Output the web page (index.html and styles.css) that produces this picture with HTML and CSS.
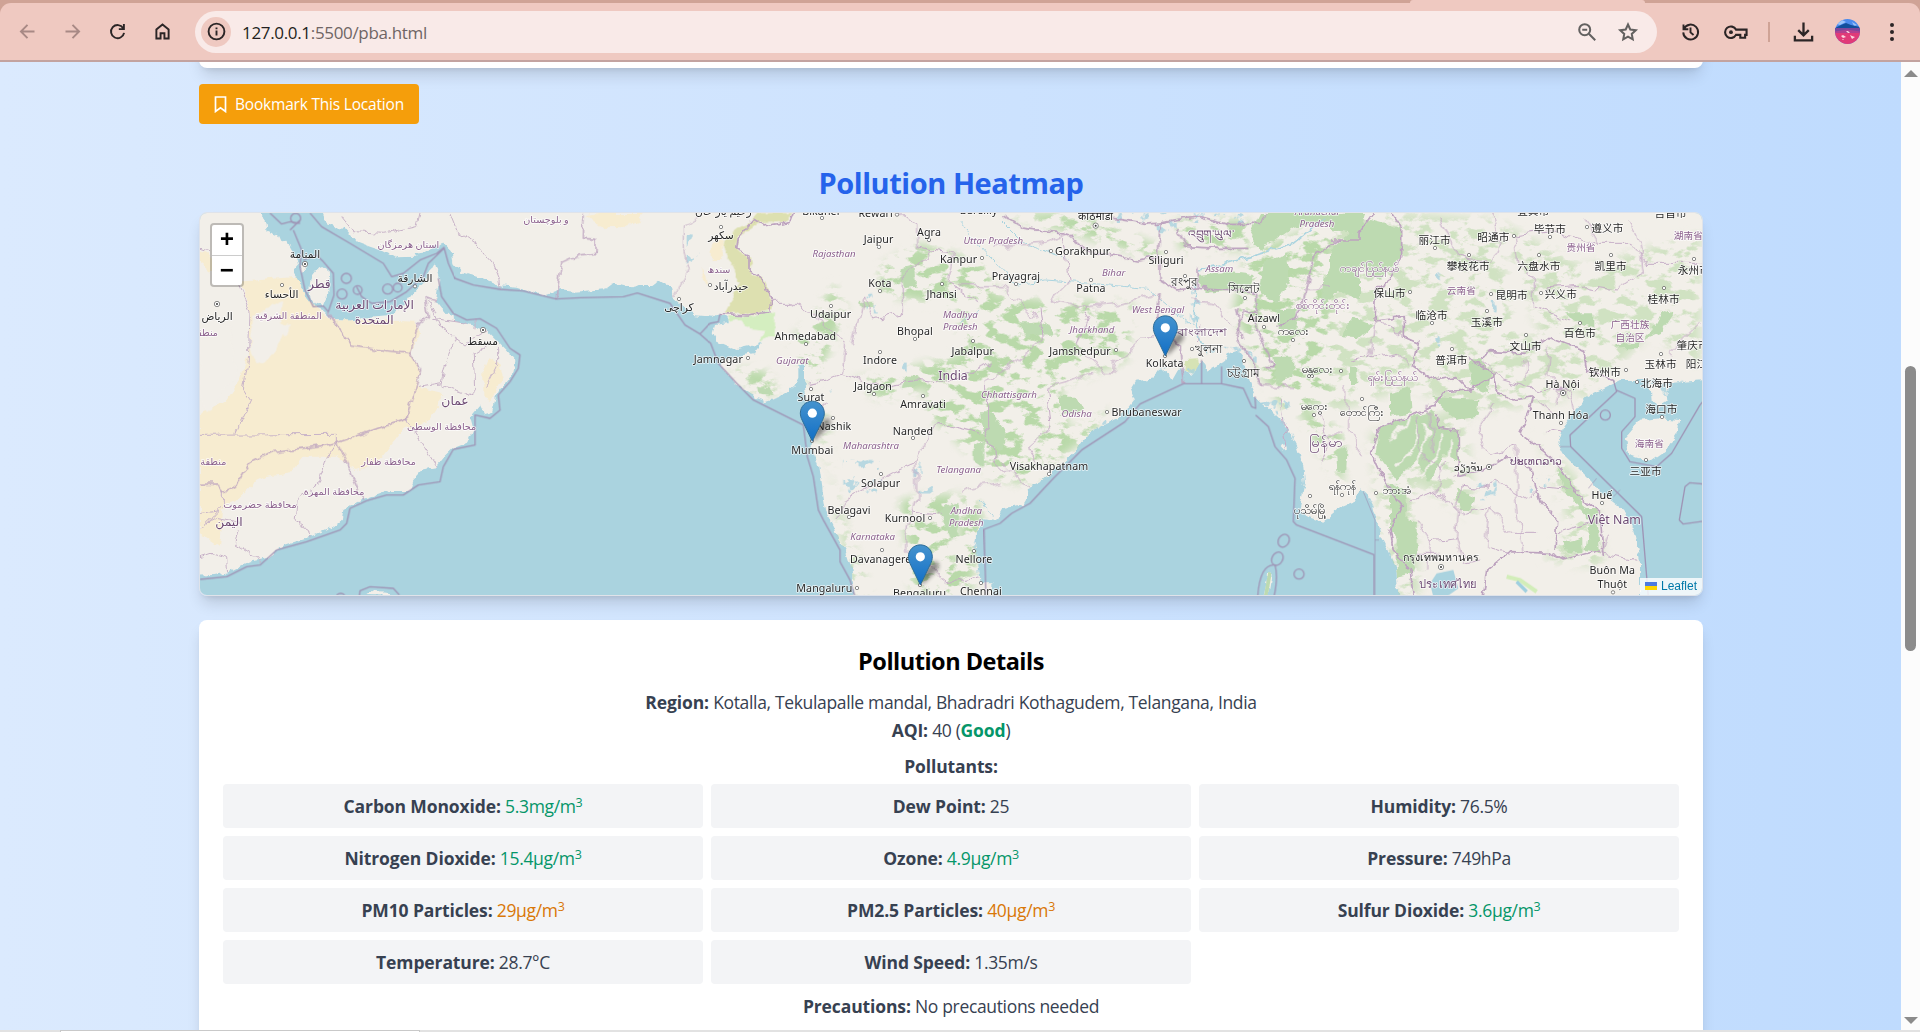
FILE: index.html
```html
<!DOCTYPE html>
<html lang="en">
<head>
<meta charset="utf-8">
<title>Pollution Heatmap</title>
<link rel="stylesheet" href="styles.css">
</head>
<body>
<div class="window">
  <header class="toolbar">
    <div class="tab-strip"><span class="tab-left"></span><span class="tab-right"></span></div>
    <div class="toolbar-row">
      <nav class="nav-icons">
        <svg class="dim" viewBox="0 0 24 24"><path d="M20 12H5M12 4.5 4.5 12l7.500 7.500"/></svg>
        <svg class="dim" viewBox="0 0 24 24"><path d="M4 12h15M12 4.500 19.500 12 12 19.500"/></svg>
        <svg viewBox="0 0 24 24"><path d="M18.500 8.200A7.500 7.500 0 1 0 19.500 13.500M19.300 3.500v5.800h-5.800"/></svg>
        <svg viewBox="0 0 24 24"><path d="M5 20V9.800L12 4l7 5.800V20h-4.800v-6H9.800v6z"/></svg>
      </nav>
      <div class="address">
        <span class="info"><svg viewBox="0 0 24 24"><circle cx="12" cy="12" r="10"/><path d="M12 10.700v6.500M12 6.800v2.200"/></svg></span>
        <span class="url"><b>127.0.0.1</b>:5500/pba.html</span>
        <svg class="grey" viewBox="0 0 24 24"><circle cx="9.500" cy="9.500" r="6"/><path d="m14 14 7 7M6.800 9.500h5.400"/></svg>
        <svg class="grey" viewBox="0 0 24 24"><path d="m12 3.800 2.500 5.500 6 .7-4.400 4.100 1.100 5.900-5.200-2.900L6.800 20l1.100-5.900L3.500 10l6-.7z"/></svg>
      </div>
      <div class="actions">
        <svg viewBox="0 0 24 24"><path d="M4 4v5.500h5.500M4.500 9A8.500 8.500 0 1 1 3.700 13M12 7.500V13l3.500 3"/></svg>
        <svg class="key" viewBox="0 0 26 24"><path d="M13.500 9.500A6 6 0 1 0 13.500 15H18v3h5v-3h1.500V9.500z"/><circle class="solid" cx="8.300" cy="12.200" r="2"/></svg>
        <i class="divider"></i>
        <svg class="download" viewBox="0 0 24 24"><path d="M12 2.500v13M6.500 10.500 12 16l5.500-5.500M3 16.500v4.700h18v-4.700"/></svg>
        <svg class="avatar" viewBox="0 0 25 25"><clipPath id="face"><circle cx="12.500" cy="12.500" r="12.500"/></clipPath><g clip-path="url(#face)"><path fill="#4b8bee" d="M0 0h25v25H0z"/><path fill="#9cc5fa" d="M2 5l5-4 4 2-6 3zM17 3l5 3-3 1z"/><path fill="#124f9c" d="M0 9l6-3 5-2 5 2 9 2v3H0z"/><path fill="#7c479c" d="M0 9h25v5H0z"/><path fill="#e03a78" d="M0 13h25v12H0z"/><path fill="#b04090" d="M0 12.500l12-2 13 2v1.500H0z"/><path fill="#fbd8e0" d="M6 17l2-1 3 2-3 1zM15 16l2 1 3 1-3 2zM11 12l2 0 2 2-2 0zM7 20l2 0-1 1z"/></g></svg>
        <svg class="dots" viewBox="0 0 6 18"><circle class="solid" cx="3" cy="2" r="2"/><circle class="solid" cx="3" cy="9" r="2"/><circle class="solid" cx="3" cy="16" r="2"/></svg>
      </div>
    </div>
  </header>

  <div class="viewport">
    <main class="page">
      <section class="search-card"></section>
      <button class="bookmark"><svg viewBox="0 0 12 17"><path d="M1 1h10v14.500L6 11.800 1 15.500z"/></svg>Bookmark This Location</button>
      <h2 class="heading">Pollution Heatmap</h2>

      <section class="map">
        <svg class="tiles" viewBox="30 39 4506 1146" preserveAspectRatio="none">
          <defs>
            <filter id="coast" filterUnits="userSpaceOnUse" x="0" y="0" width="4600" height="1230" color-interpolation-filters="sRGB">
              <feTurbulence type="fractalNoise" baseFrequency="0.035" numOctaves="3" seed="4"/>
              <feDisplacementMap in="SourceGraphic" scale="22" xChannelSelector="R" yChannelSelector="G"/>
            </filter>
            <filter id="wiggle" filterUnits="userSpaceOnUse" x="0" y="0" width="4600" height="1230" color-interpolation-filters="sRGB">
              <feTurbulence type="fractalNoise" baseFrequency="0.022" numOctaves="2" seed="9"/>
              <feDisplacementMap in="SourceGraphic" scale="42" xChannelSelector="R" yChannelSelector="G"/>
            </filter>
            <filter id="speckle" filterUnits="userSpaceOnUse" x="0" y="0" width="4600" height="1230" color-interpolation-filters="sRGB">
              <feGaussianBlur in="SourceGraphic" stdDeviation="14" result="soft"/>
              <feTurbulence type="fractalNoise" baseFrequency="0.018 0.03" numOctaves="5" seed="21"/>
              <feColorMatrix values="0 0 0 0 0  0 0 0 0 0  0 0 0 0 0  9 0 0 0 -4.500" result="spots"/>
              <feComposite in="soft" in2="spots" operator="in"/>
            </filter>
            <filter id="veins" filterUnits="userSpaceOnUse" x="0" y="0" width="4600" height="1230" color-interpolation-filters="sRGB">
              <feTurbulence type="fractalNoise" baseFrequency="0.03" numOctaves="4" seed="33"/>
              <feColorMatrix values="0 0 0 0 0  0 0 0 0 0  0 0 0 0 0  0 12 0 0 -7.200" result="spots"/>
              <feComposite in="SourceGraphic" in2="spots" operator="in"/>
            </filter>
            <filter id="blur" x="-50%" y="-50%" width="200%" height="200%"><feGaussianBlur stdDeviation="2.200"/></filter>
            <linearGradient id="pinfill" x1="0" y1="0" x2="0" y2="1"><stop offset="0" stop-color="#4593ce"/><stop offset="1" stop-color="#126fc6"/></linearGradient>
            <g id="pin">
              <path d="M12.500 40.500 17 25 27 17q6 1 3 8L17 38z" fill="#000" opacity=".42" filter="url(#blur)"/>
              <path d="M12.500.500C5.900.500.500 5.900.500 12.500c0 2.500.700 4.700 1.800 7L12.500 40.600l10.200-21.100c1.100-2.300 1.800-4.500 1.800-7C24.500 5.900 19.100.500 12.500.500z" fill="url(#pinfill)" stroke="#2e6c97" stroke-width="1"/>
              <circle cx="12.500" cy="12.500" r="4.600" fill="#fff"/>
            </g>
            <g id="land">
              <path d="M0 0H200L225 70 230 92 260 105 270 127 292 125 312 160 330 190 308 215 330 250 350 290 375 325 400 332 430 360 480 362 540 350 600 345 640 320 660 290 700 250 735 190 748 240 738 300 770 340 800 365 860 378 890 390 920 420 950 450 976 480 970 520 940 560 905 605 870 615 840 650 850 690 835 727 790 745 760 775 738 802 700 808 670 840 660 870 600 870 520 900 460 930 455 960 430 980 360 1010 280 1035 230 1075 180 1085 120 1115 70 1125 0 1128z"/>
              <path d="M362 230 388 198 412 212 416 240 410 290 398 318 370 310 358 270zM335 195l10-2 3 18-8 4z"/>
              <path d="M385 0 410 70 470 90 500 125 540 140 570 150 600 165 650 165 720 155 760 125 785 150 790 190 810 215 860 230 920 255 980 260 1060 287 1110 270 1150 275 1240 268V0z"/>
              <path d="M870 615 918 590 905 640 885 645zM530 1185l20-12 40 2 20 12zM600 160l70 0 10 10-60 2z"/>
              <g transform="translate(1170)">
                <path d="M0 0V268L80 265 100 250 150 262 180 255 220 255 240 240 268 258 275 290 310 320 340 345 400 350 415 340 440 350 440 370 405 375 398 400 412 425 470 450 515 440 545 425 520 460 480 468 425 478 425 500 450 530 490 570 530 595 560 603 600 590 640 560 655 530 655 492 675 492 675 540 682 600 690 640 695 680 695 740 715 800 725 870 735 930 760 980 770 1010 800 1060 815 1110 828 1230H1240V1150L1200 1150 1190 1110 1190 1000 1205 960V0z"/>
              </g>
              <g transform="translate(2310)">
                <path d="M0 0V1230H68L60 1130 50 1050 50 990 70 955 110 960 130 925 190 915 205 890 200 865 250 840 310 790 350 750 400 690 480 650 500 630 522 600 510 570 525 545 580 535 600 505 640 540 660 505 700 522 725 480 740 515 790 490 800 460 830 450 850 475 870 550 885 590 930 630 960 660 990 700 1010 740 1030 800 1035 850 1020 920 1040 950 1090 965 1140 920 1180 900 1200 870V0z"/>
                <path d="M965 738l10-4 6 12-8 2zM925 1115l10 5-12 70h-12z"/>
              </g>
              <g transform="translate(3420)">
                <path d="M0 0V945L30 922 70 905 90 862 110 880 130 920 150 1000 180 1060 200 1120 208 1230H930V1080L910 990 880 930 830 890 800 860 760 820 700 760 685 730 700 680 730 640 770 590 810 570 870 540 960 540 965 600 990 618 1015 600 1010 550 1060 545 1160 538V0z"/>
                <path d="M885 715 930 662 990 655 1050 660 1042 700 1010 750 960 785 895 765z"/>
              </g>
            </g>
            <mask id="onland" maskUnits="userSpaceOnUse" x="0" y="0" width="4600" height="1230"><use href="#land" fill="#fff"/></mask>
          </defs>
          <path fill="#aad3df" d="M0 0h4600v1230H0z"/>
          <use href="#land" fill="#f2efe9" filter="url(#coast)"/>

          <g fill="#f7ecd0" filter="url(#coast)">
            <path d="M30 150 60 165 75 200 60 215 30 190zM150 245 320 230 350 290 385 330 430 362 540 360 680 365 690 400 662 460 692 510 680 560 760 580 720 660 640 690 560 790 500 810 440 770 340 770 300 820 230 830 190 850 140 900 100 920 90 1040 30 1000V640L110 600 150 540 180 440 180 330z"/>
            <path d="M895 475 925 490 940 530 905 600 880 590 880 510zM745 620 720 660 640 690 680 600z"/>
            <path transform="translate(1170)" d="M20 45 60 80 130 82 180 60 190 39H60zM395 130 430 120 425 180 395 180zM360 200l20 30 5 30-20-30z"/>
          </g>
          <g fill="#f2efe9" filter="url(#coast)">
            <path d="M190 345 280 300 270 370 300 380 240 480 200 490 180 450zM55 640 30 600V350L120 380 140 520z"/>
          </g>
          <g transform="translate(1170)" filter="url(#coast)">
            <path fill="#dde0b0" d="M540 39 520 60 480 80 440 110 430 160 460 200 480 250 435 335 500 345 575 330 575 300 545 230 515 225 510 170 470 150 475 110 540 70 620 65 640 39z"/>
            <path fill="#d4eec0" d="M445 345 500 350 560 335 585 340 580 410 540 425 560 390 510 385 480 360 445 365z"/>
          </g>

          <g mask="url(#onland)">
            <g fill="#b9d9a9" filter="url(#speckle)">
              <g transform="translate(1170)">
                <path d="M900 200 1020 130 1240 200 1240 330 1000 300 900 280zM820 540 1000 500 1240 440V600L1060 560 900 600zM1040 560 1240 540V830L1150 740 1040 640z"/>
                <path d="M700 620 740 640 760 900 830 1180 870 1185 790 960zM960 900 1120 880 1120 1060 1180 1185 1000 1185zM630 420 700 360 760 250 800 330 700 560zM450 510l100 0 50 60-60 20z" />
              </g>
              <g transform="translate(2310)">
                <path d="M0 270 260 300 520 310 500 480 300 560 330 700 440 620 400 700 200 850 100 840 60 600 0 560zM130 39 600 180 600 140 360 39zM650 60 870 60 860 150 660 150zM0 880 50 900 70 960 30 1185H0z"/>
                <path d="M860 160 1110 60 1110 600 980 640 900 520 820 330zM1000 600 1150 700 1150 860 1080 760z"/>
              </g>
              <g transform="translate(3420)">
                <path d="M0 39 220 39 500 60 560 400 800 440 700 600 420 640 240 560 0 640zM120 700 400 620 440 960 250 850 270 1185H200L150 980zM620 700 800 900 820 1100 640 1080 720 980zM500 60 760 200 1110 100V500L960 400 760 600 640 420z" opacity=".6"/>
              </g>
            </g>
            <g fill="#bddab1" filter="url(#coast)">
              <g transform="translate(2310)">
                <path d="M900 39H1110V70L1000 80 900 150 870 100zM715 225 800 215 880 225 870 265 740 275 715 250zM910 190l70-30 10 80-40 70-50-30zM950 330l60 0 0 60-60 0zM940 470l60 0 0 60-50 20zM180 370l80 0 20 30-80 10zM60 640 100 640 140 700 130 750 80 740zM300 590l50 0 20 40-70 20zM1150 140 1200 150V300L1130 270 1080 340 1090 240z"/>
                <path fill="#d6e3b5" d="M675 480 715 478 718 518 672 530z"/>
                <path d="M920 1115l14 0-8 70h-14z"/>
              </g>
              <g transform="translate(3420)">
                <path d="M0 150 60 100 120 60 215 85 215 170 150 240 90 190 40 240 0 300zM0 39H110L90 100 0 90zM62 350 130 375 85 415 38 412zM20 745 50 745 45 820 25 810zM180 580 240 565 245 640 180 650zM60 500 85 500 85 545 60 555z"/>
                <path d="M415 475 450 475 480 520 470 580 425 560 420 500zM310 590 445 600 440 650 380 660 330 620zM150 680 310 630 330 680 385 690 390 790 340 760 300 850 260 780 200 840 140 760zM180 850 225 870 230 960 260 970 260 1060 245 1120 200 1130 200 1020 180 990zM375 860 430 890 420 930 390 930zM1000 330 1030 340 990 400 940 420 980 370zM705 340 790 340 790 380 730 360zM850 440 930 425 930 445 860 445zM680 800 720 840 770 930 800 930 810 1060 770 1050 780 960 700 870zM700 1030 760 1010 760 1060 710 1060z"/>
              </g>
              <g transform="translate(1170)">
                <path d="M965 205 1000 195 1010 260 970 265zM840 305l40 0 0 15-35 3zM530 560l50 10-5 15-40-5zM975 530l40 0 0 25-50 10zM1180 740l30-20 0 80-30-20zM1075 930l60-25 0 110-25 0z"/>
              </g>
            </g>
            <g fill="none" stroke="#f2efe9" stroke-width="7" filter="url(#wiggle)">
              <path d="M3600 720Q3640 690 3650 650M3620 800Q3690 750 3680 670M3670 790Q3730 730 3710 660M3700 820Q3760 770 3750 690M3780 720V780"/>
            </g>
            <g fill="#a9d2de" filter="url(#veins)">
              <path transform="translate(1170)" d="M320 80h40v120h-40zM860 280h40v60h-40zM940 470h40v50h-40zM750 540h40v40h-40zM790 780h120v100h-120zM1000 780h60v100h-60zM1180 980h30v140h-30z" opacity=".8"/>
              <path transform="translate(2310)" d="M470 39h450v30H470zM590 60h60v40h-60zM690 240h30v140h-30zM600 500h130v40H600zM730 440h160v80H730zM890 600h120v130H890zM380 660h60v40h-60z" opacity=".8"/>
              <path transform="translate(3420)" d="M290 190h40v70h-40zM300 400h30v60h-30zM460 260h40v80h-40zM440 840h60v60h-60zM600 820h60v60h-60zM900 540h160v50H900z" opacity=".8"/>
            </g>
            <g transform="translate(2310)" fill="none" stroke="#abd4df" stroke-width="3" filter="url(#coast)">
              <path stroke-width="5" d="M720 210 800 190 900 160 1000 130 1060 80 1100 60M706 250V380L740 460"/><path d="M0 70 80 160 170 255 260 240 390 250 560 265 700 380M120 60 190 130 330 180M0 370 60 330M60 900 100 950"/>
            </g>
            <path fill="#aad3df" d="M3740 1120 3790 1110 3805 1165 3770 1190 3730 1190 3720 1150z"/>
            <path d="M3950 1130 3990 1140 4040 1175" fill="none" stroke="#d2edb9" stroke-width="12"/><path d="M3980 1145 4010 1175" fill="none" stroke="#9fcfdf" stroke-width="10"/>
          </g>

          <g fill="none" stroke="#c8b3c8" stroke-width="3" filter="url(#coast)">
            <path d="M30 145 60 155M145 255 180 335 175 480 160 570 182 605 138 700M30 706 442 703V728M442 728 408 780 385 850 325 895 318 965 355 985 360 1015M30 940 90 932 50 970 80 955 150 970M100 875V915L30 985M145 985 135 1030 200 1070 212 1090M30 1070 60 1060 110 1075 113 1120M455 50 490 95 580 100 680 80 690 39M780 39 800 90 860 130 910 190 930 240 935 270M710 290 750 380 825 435 895 390M800 415 765 500 752 555 855 590 850 465 890 440M752 548 680 560M648 655 740 802M730 355 830 370M855 385V360M920 440 920 500 890 560"/>
            <path transform="translate(1170)" d="M360 50 310 80 310 150 325 210 300 270 275 290"/>
          </g>
          <g fill="none" stroke="#bda3bf" stroke-width="4" stroke-linejoin="round" filter="url(#coast)">
            <path d="M415 340 482 438 660 461 692 510 648 655 442 728 360 742 245 755 180 788 135 860 100 875 84 852 30 853M442 728 522 905M660 461 685 370 715 350 705 290 740 300M1098 295 1115 190 1170 165 1215 160 1215 118 1180 115 1182 39"/>
            <g transform="translate(1170)">
              <path stroke-width="5" d="M640 39 630 65 550 78 520 60 475 110 470 150 510 165 510 215 545 235 575 300 572 335 500 345 420 340"/>
            </g>
            <g transform="translate(2310)">
              <path stroke-width="5" d="M130 45 190 85 320 100 380 150 460 165 530 180 595 170 600 70 640 60M460 55 560 70 640 60 720 50 800 70 900 70 920 39M650 90 680 140 780 145 865 145M600 180 600 240 650 270 715 260 710 200M600 280 590 350 660 440 670 550M715 262 820 270 890 280 890 340 850 330 830 420 870 470 905 560M830 330 850 420M870 330 905 420 940 500 910 500M1140 120 1060 170 1040 270 1010 350 950 380"/>
            </g>
            <g transform="translate(3420)">
              <path stroke-width="5" d="M0 120 90 120 90 95 130 39M185 39 215 85 215 170 180 240 140 270 135 360 220 350 220 410 265 430 250 500 310 540 380 530 420 570 500 520M415 475 490 520 500 580 550 600 610 590 600 630 570 700 640 750 680 790 740 880 810 940 820 1070M450 475 480 455 590 460 660 410 760 450 770 510 850 540M420 570 340 575 310 620 235 650 150 680 125 760 160 840 215 910 180 990 190 1050 240 1110 250 1190M320 640 330 685 385 690 385 830M370 830 460 810 530 770 600 800 630 900 680 960 675 1050M460 1190 470 1110 540 1055 660 1060 700 1080 810 1050"/>
            </g>
          </g>
          <g fill="none" stroke="#c5abc6" stroke-width="3" filter="url(#wiggle)">
            <g transform="translate(1170)">
              <path d="M575 310 640 310 700 340 760 400 800 430 790 520 740 540 680 550M820 430 850 290 880 360 970 340 970 230 1060 150 1120 160 1100 250 1200 300M780 520 900 560 1010 540 1080 550 1240 490M740 600 720 640M1210 700 1070 670 1030 730 1010 790 940 820 800 900 760 960M1010 790 1010 900 980 980 980 1060 1050 1100 1090 1150 1200 1130M1080 940 1000 930M960 39 1010 80 1010 140 1060 150"/>
            </g>
            <g transform="translate(2310)">
              <path d="M310 110 330 240 270 300 390 320 480 310 590 280M390 320 350 440 440 520 540 430 590 380M240 320 250 420 180 480 80 540 80 680 110 780 200 860M400 520 260 560 270 680 200 740 240 800M0 260 130 260 230 350M700 300 760 310 820 380M1000 560 900 550M1040 270 1110 260M1060 620 1110 720 1080 800M1090 700 1150 700M0 880 60 860 130 850M960 600 980 740M100 140 240 130 320 100M700 430 720 380"/>
            </g>
            <g transform="translate(3420)">
              <path d="M330 39 380 170 480 190 510 120 490 39M550 110 560 190 610 230 610 320 720 360M550 105 660 90 800 130 760 60M800 130 900 130 950 190 1110 190M640 270 780 260 860 270 940 220 930 120 900 60M1080 400 1110 370M1020 460 1080 400M60 490 200 460 240 500M50 560 50 680 100 760M120 480 140 360 210 400M450 480 520 540 620 570 720 560M580 480 590 540M660 440 650 520 690 560 720 600M620 600 680 650M500 610 440 700 480 760 560 740M630 860 740 870M680 1000 800 960"/>
              <path d="M250 900 320 880 400 940 480 920 540 1000 620 1000M320 880 340 780M260 960 300 1020 380 1010 400 1090 450 1080M300 1020 290 1100M380 1010 390 860 470 870 500 840 590 900 620 870M480 920 470 1040 540 1060M560 740 560 900 570 1000 580 1060M260 1060 330 1060M640 690 700 700M840 1000 820 1060M830 1060 920 1080M260 640 270 760 340 820M300 620 310 760M720 560 740 640M690 560 680 620"/>
            </g>
          </g>

          <g fill="none" stroke="#9c89ae" stroke-width="4" stroke-linejoin="round" opacity=".85">
            <path d="M240 39 275 72 300 65 330 70M360 39 395 80 480 130 580 190 605 230 640 220 690 180 740 160 762 142 775 190 795 235 850 255 930 268 1000 273 1098 297 1170 293 1300 290 1342 279 1440 310 1485 375 1530 402 1560 370 1585 365 1590 342M1530 402 1562 430 1585 490 1640 550 1690 600 1840 675 1852 770 1870 830 1885 930 1900 960 1950 1050 1950 1085 1980 1140 1995 1190M310 90 335 150 330 200 345 270 370 320 400 318 415 335 432 285 430 220 400 185 380 165 340 180M500 260 515 290 545 310 600 305 650 275 700 230 715 190 762 145M300 90 330 60M745 235 755 290 790 340 830 360 870 356 920 385 960 445 990 465 985 505 960 545 925 585 930 630 900 655 855 645 855 735 790 748 760 800 750 845 685 855 640 885 590 885 530 902 480 925 470 970 450 990 350 1025 260 1050 210 1095 170 1100 110 1130 30 1138M508 1190 510 1172 540 1160 610 1165 628 1185M440 1185q12-10 24 0"/>
            <circle cx="469" cy="235" r="15"/><circle cx="456" cy="282" r="15"/><circle cx="593" cy="267" r="15"/><circle cx="623" cy="263" r="13"/><circle cx="317" cy="55" r="15"/><circle cx="503" cy="270" r="13"/>
            <path transform="translate(2310)" d="M78 1190 72 988 120 970 155 940 210 910 280 835 365 750 495 665 540 612 670 551H785L850 565 875 620 887 625 885 590M887 645 925 680 945 740 980 780 1005 835 1000 965 1010 975 1242 1064V1190M893 1190Q900 1090 945 1095 955 1130 942 1190M725 480V550M785 500V550"/>
            <g transform="translate(2310)"><ellipse cx="971" cy="1022" rx="16" ry="20" transform="rotate(30 971 1022)"/><ellipse cx="952" cy="1076" rx="16" ry="21" transform="rotate(30 952 1076)"/><circle cx="1017" cy="1122" r="15"/></g>
            <path transform="translate(3420)" d="M850 540 860 575 720 705 722 740 935 950 955 1190M858 570 915 595V650L875 695 875 745 900 785 980 800 1025 760 1110 615 1130 590M1130 853 1080 848 1065 860 1048 960 1060 972 1130 962"/>
            <path stroke-width="2" d="M3520 875 3555 960V1190M3555 1020h12M4140 740H4110M4220 835 4195 865M4270 890 4290 870"/>
            <circle cx="4246" cy="645" r="15"/>
          </g>

          <g class="dots-layer">
            <circle cx="276" cy="255" r="5"/><circle cx="675" cy="259" r="5"/>
            <g class="capital"><circle cx="345" cy="192" r="8"/><circle cx="81" cy="312" r="8"/><circle cx="879" cy="390" r="8"/><circle cx="2717" cy="77" r="8"/><circle cx="4119" cy="579" r="8"/><circle cx="3897" cy="801" r="8"/><circle cx="3753" cy="1101" r="8"/></g>
            <g class="capital-core"><circle cx="345" cy="192" r="3"/><circle cx="81" cy="312" r="3"/><circle cx="879" cy="390" r="3"/><circle cx="2717" cy="77" r="3"/><circle cx="4119" cy="579" r="3"/><circle cx="3897" cy="801" r="3"/><circle cx="3753" cy="1101" r="3"/></g>
            <g transform="translate(1170)"><circle cx="423" cy="81" r="5"/><circle cx="390" cy="255" r="5"/><circle cx="297" cy="297" r="5"/><circle cx="726" cy="54" r="5"/><circle cx="951" cy="44" r="5"/><circle cx="897" cy="141" r="5"/><circle cx="1047" cy="120" r="5"/><circle cx="1086" cy="252" r="5"/><circle cx="900" cy="273" r="5"/><circle cx="753" cy="318" r="5"/><circle cx="1005" cy="417" r="5"/><circle cx="678" cy="432" r="5"/><circle cx="900" cy="456" r="5"/><circle cx="504" cy="474" r="5"/><circle cx="1179" cy="423" r="5"/><circle cx="693" cy="567" r="5"/><circle cx="882" cy="582" r="5"/><circle cx="1029" cy="588" r="5"/><circle cx="759" cy="654" r="5"/><circle cx="999" cy="714" r="5"/><circle cx="696" cy="723" r="5"/><circle cx="903" cy="822" r="5"/><circle cx="807" cy="951" r="5"/><circle cx="1050" cy="954" r="5"/><circle cx="906" cy="1050" r="5"/><circle cx="1182" cy="1053" r="5"/><circle cx="1020" cy="1155" r="5"/><circle cx="831" cy="1164" r="5"/></g>
            <g transform="translate(2310)"><circle cx="66" cy="174" r="5"/><circle cx="273" cy="153" r="5"/><circle cx="168" cy="252" r="5"/><circle cx="393" cy="240" r="5"/><circle cx="618" cy="156" r="5"/><circle cx="675" cy="228" r="5"/><circle cx="855" cy="294" r="5"/><circle cx="912" cy="381" r="5"/><circle cx="999" cy="420" r="5"/><circle cx="468" cy="450" r="5"/><circle cx="615" cy="468" r="5"/><circle cx="696" cy="447" r="5"/><circle cx="852" cy="483" r="5"/><circle cx="1143" cy="513" r="5"/><circle cx="441" cy="636" r="5"/><circle cx="1062" cy="645" r="5"/><circle cx="267" cy="822" r="5"/><circle cx="1050" cy="888" r="5"/><circle cx="1146" cy="885" r="5"/><circle cx="63" cy="1149" r="5"/></g>
            <g transform="translate(3420)"><circle cx="315" cy="144" r="5"/><circle cx="552" cy="108" r="5"/><circle cx="417" cy="165" r="5"/><circle cx="660" cy="111" r="5"/><circle cx="627" cy="165" r="5"/><circle cx="771" cy="81" r="5"/><circle cx="843" cy="165" r="5"/><circle cx="1092" cy="177" r="5"/><circle cx="240" cy="276" r="5"/><circle cx="483" cy="282" r="5"/><circle cx="633" cy="279" r="5"/><circle cx="1002" cy="264" r="5"/><circle cx="306" cy="369" r="5"/><circle cx="471" cy="333" r="5"/><circle cx="750" cy="369" r="5"/><circle cx="588" cy="405" r="5"/><circle cx="366" cy="447" r="5"/><circle cx="993" cy="462" r="5"/><circle cx="888" cy="510" r="5"/><circle cx="921" cy="546" r="5"/><circle cx="96" cy="597" r="5"/><circle cx="996" cy="651" r="5"/><circle cx="693" cy="669" r="5"/><circle cx="948" cy="780" r="5"/><circle cx="138" cy="879" r="5"/><circle cx="816" cy="909" r="5"/><circle cx="849" cy="1177" r="5"/></g>
          </g>

          <g class="city">
            <text x="345" y="175">المنامة</text><text x="275" y="294">الأحساء</text><text x="81" y="359">الرياض</text><text x="675" y="247">الشارقة</text><text x="878" y="434">مسقط</text>
            <g transform="translate(1170)">
              <text x="423" y="118">سکھر</text><text x="453" y="271">حيدرآباد</text><text x="297" y="334">کراچی</text><text x="430" y="44">رحیم یار خان</text>
              <text x="725" y="45">Bikaner</text><text x="887" y="52">Rewari</text><text x="1196" y="42">Bareilly</text><text x="896" y="129">Jaipur</text><text x="1047" y="108">Agra</text><text x="1136" y="188">Kanpur</text><text x="900" y="261">Kota</text><text x="1085" y="293">Jhansi</text><text x="752" y="355">Udaipur</text><text x="1005" y="404">Bhopal</text><text x="676" y="421">Ahmedabad</text><text x="900" y="493">Indore</text><text x="415" y="488">Jamnagar</text><text x="1178" y="465">Jabalpur</text><text x="693" y="604">Surat</text><text x="879" y="570">Jalgaon</text><text x="1029" y="623">Amravati</text><text x="762" y="690">Nashik</text><text x="999" y="704">Nanded</text><text x="697" y="762">Mumbai</text><text x="902" y="861">Solapur</text><text x="807" y="941">Belagavi</text><text x="975" y="966">Kurnool</text><text x="902" y="1089">Davanagere</text><text x="1182" y="1088">Nellore</text><text x="733" y="1176">Mangaluru</text><text x="1019" y="1190">Bengaluru</text><text x="1203" y="1186">Chennai</text>
            </g>
            <g transform="translate(2310)">
              <text x="407" y="60">काठमाडौं</text><text x="368" y="165">Gorakhpur</text><text x="168" y="241">Prayagraj</text><text x="393" y="275">Patna</text><text x="618" y="193">Siliguri</text><text class="bengali" x="674" y="259">রংপুর</text><text class="bengali" x="853" y="279">সিলেট</text><text x="912" y="367">Aizawl</text><text class="burmese" x="1000" y="405">ကလေး</text><text x="360" y="465">Jamshedpur</text><text x="614" y="502">Kolkata</text><text class="bengali" x="746" y="459">খুলনা</text><text class="bengali" x="850" y="532">চট্টগ্রাম</text><text class="burmese" x="1073" y="518">မန္တလေး</text><text x="560" y="648">Bhubaneswar</text><text class="burmese" x="1062" y="630">မကွေး</text><text x="267" y="810">Visakhapatnam</text><text class="burmese" x="1050" y="942">ပုသိမ်မြို့</text><text class="burmese" x="1146" y="870">ရန်ကုန်</text>
            </g>
            <g transform="translate(3420)">
              <text x="610" y="44">宜宾市</text><text x="1022" y="52">吉首市</text><text x="314" y="133">丽江市</text><text x="490" y="124">昭通市</text><text x="660" y="100">毕节市</text><text x="832" y="97">遵义市</text><text x="415" y="209">攀枝花市</text><text x="627" y="209">六盘水市</text><text x="842" y="210">凯里市</text><text x="1092" y="222">永州市</text><text x="179" y="292">保山市</text><text x="545" y="298">昆明市</text><text x="693" y="294">兴义市</text><text x="1001" y="308">桂林市</text><text x="305" y="357">临沧市</text><text x="471" y="379">玉溪市</text><text x="750" y="412">百色市</text><text x="587" y="450">文山市</text><text x="364" y="492">普洱市</text><text x="1088" y="448">肇庆市</text><text x="992" y="505">玉林市</text><text x="1116" y="505">阳江市</text><text x="825" y="527">钦州市</text><text x="981" y="562">北海市</text><text x="994" y="640">海口市</text><text x="947" y="825">三亚市</text><text x="698" y="563">Hà Nội</text><text x="692" y="657">Thanh Hóa</text><text class="burmese" x="96" y="649">တောင်ကြီး</text><text class="lao" x="414" y="812">ວຽງຈັນ</text><text class="burmese" x="198" y="881">ဘားအံ</text><text x="816" y="896">Huế</text><text x="332" y="1082">กรุงเทพมหานคร</text><text x="847" y="1123">Buôn Ma</text><text x="847" y="1164">Thuột</text>
            </g>
          </g>
          <g class="state">
            <text x="655" y="145">استان هرمزگان</text><text x="1068" y="70">و بلوچستان</text><text x="295" y="358">المنطقة الشرقية</text><text x="45" y="408">منطقة</text><text x="755" y="690">محافظة الوسطى</text><text x="596" y="794">محافظة ظفار</text><text x="70" y="796">منطقة</text><text x="432" y="886">محافظة المهرة</text><text x="210" y="924">محافظة حضرموت</text>
            <g transform="translate(1170)"><text x="417" y="218">سندھ</text><text class="latin" x="762" y="171">Rajasthan</text><text class="latin" x="1141" y="354">Madhya</text><text class="latin" x="1141" y="390">Pradesh</text><text class="latin" x="637" y="491">Gujarat</text><text class="latin" x="873" y="748">Maharashtra</text><text class="latin" x="1136" y="818">Telangana</text><text class="latin" x="1159" y="941">Andhra</text><text class="latin" x="1159" y="977">Pradesh</text><text class="latin" x="878" y="1020">Karnataka</text></g>
            <g transform="translate(2310)"><text class="latin" x="100" y="131">Uttar Pradesh</text><text class="latin" x="461" y="227">Bihar</text><text class="latin" x="594" y="338">West Bengal</text><text class="latin" x="396" y="399">Jharkhand</text><text class="latin" x="147" y="595">Chhattisgarh</text><text class="latin" x="350" y="651">Odisha</text><text class="latin" x="778" y="215">Assam</text><text class="latin" x="1071" y="46">Arunachal</text><text class="latin" x="1071" y="82">Pradesh</text><text class="burmese" x="1088" y="326">စစ်ကိုင်းတိုင်း</text></g>
            <g transform="translate(3420)"><text class="burmese" x="118" y="216">ကချင်ပြည်နယ်</text><text x="753" y="153">贵州省</text><text x="1075" y="116">湖南省</text><text x="394" y="281">云南省</text><text x="900" y="383">广西壮族</text><text x="900" y="423">自治区</text><text class="burmese" x="190" y="543">ရှမ်းပြည်နယ်</text><text x="958" y="742">海南省</text></g>
          </g>
          <g class="country">
            <text x="388" y="265">قطر</text><text x="554" y="328">الإمارات العربية</text><text x="553" y="373">المتحدة</text><text x="795" y="614">عمان</text><text x="117" y="978">اليمن</text>
            <text x="2289" y="539">India</text><text class="small" x="3063" y="113" textLength="138" lengthAdjust="spacingAndGlyphs">འབྲུག་ཡུལ་</text><text class="small" x="3036" y="409" textLength="152" lengthAdjust="spacingAndGlyphs">বাংলাদেশ</text><text class="burmese large" x="3408" y="742">မြန်မာ</text><text class="small" x="4038" y="795" textLength="156" lengthAdjust="spacingAndGlyphs">ປະເທດລາວ</text><text x="4273" y="973">Việt Nam</text><text class="small" x="3773" y="1165" textLength="170" lengthAdjust="spacingAndGlyphs">ประเทศไทย</text>
          </g>
          <use href="#pin" transform="translate(1829.500 602) scale(3)"/>
          <use href="#pin" transform="translate(2153.500 1033) scale(3)"/>
          <use href="#pin" transform="translate(2888.500 346) scale(3)"/>
        </svg>
        <div class="zoom-control"><span>+</span><span>&minus;</span></div>
        <div class="attribution"><i class="flag"></i>Leaflet</div>
      </section>

      <section class="details">
        <h3>Pollution Details</h3>
        <p><b>Region:</b> Kotalla, Tekulapalle mandal, Bhadradri Kothagudem, Telangana, India</p>
        <p><b>AQI:</b> 40 (<b class="good">Good</b>)</p>
        <p class="label"><b>Pollutants:</b></p>
        <div class="grid">
          <div><b>Carbon Monoxide:</b> <span class="good">5.3mg/m<sup>3</sup></span></div>
          <div><b>Dew Point:</b> 25</div>
          <div><b>Humidity:</b> 76.5%</div>
          <div><b>Nitrogen Dioxide:</b> <span class="good">15.4µg/m<sup>3</sup></span></div>
          <div><b>Ozone:</b> <span class="good">4.9µg/m<sup>3</sup></span></div>
          <div><b>Pressure:</b> 749hPa</div>
          <div><b>PM10 Particles:</b> <span class="fair">29µg/m<sup>3</sup></span></div>
          <div><b>PM2.5 Particles:</b> <span class="fair">40µg/m<sup>3</sup></span></div>
          <div><b>Sulfur Dioxide:</b> <span class="good">3.6µg/m<sup>3</sup></span></div>
          <div><b>Temperature:</b> 28.7°C</div>
          <div><b>Wind Speed:</b> 1.35m/s</div>
        </div>
        <p class="precautions"><b>Precautions:</b> No precautions needed</p>
      </section>
    </main>
    <aside class="scrollbar"><i class="up"></i><i class="thumb"></i><i class="down"></i></aside>
  </div>
  <footer class="taskbar"><span></span></footer>
</div>
</body>
</html>
```
FILE: styles.css
```css
* { box-sizing: border-box; }
body { margin: 0; font-family: "Open Sans", "Noto Sans", sans-serif; }
h2, h3, p { margin: 0; }
.window { display: flex; flex-direction: column; width: 1920px; height: 1032px; overflow: hidden; }

.toolbar { flex: none; height: 62px; background: #cfa396; border-bottom: 2px solid #c3a3a0; display: flex; flex-direction: column; position: relative; z-index: 1; }
.tab-strip { height: 3px; display: flex; justify-content: space-between; padding: 0 275px 0 0; }
.tab-left { width: 0; }
.tab-right { width: 235px; height: 3px; background: #efc9c1; border-radius: 3px 3px 0 0; }
.toolbar-row { flex: 1; display: flex; align-items: center; background: #efc9c1; border-radius: 11px 11px 0 0; }
.toolbar svg { fill: none; stroke: #2b2526; stroke-width: 2.2; flex: none; width: 21px; height: 21px; }
.toolbar svg .solid { fill: #2b2526; stroke: none; }
.toolbar .dim { stroke: #a88985; }
.nav-icons { display: flex; gap: 24px; padding-left: 17px; width: 195px; }
.address { width: 1462px; height: 42px; border-radius: 21px; background: #f9eae8; display: flex; align-items: center; padding: 0 18px 0 6px; }
.info { width: 30px; height: 30px; border-radius: 50%; background: #efc9c1; display: flex; align-items: center; justify-content: center; margin-right: 11px; }
.toolbar .info svg { width: 19px; height: 19px; stroke-width: 2.4; }
.url { flex: 1; font-size: 17px; letter-spacing: -.33px; color: #6f6564; padding-top: 1px; }
.url b { font-weight: 400; color: #231f20; }
.toolbar .grey { stroke: #636160; margin-left: 19px; width: 22px; height: 22px; }
.actions { display: flex; align-items: center; padding-left: 23px; }
.toolbar .key { width: 25px; height: 24px; margin-left: 22px; }
.divider { width: 2px; height: 20px; background: #cfa396; margin: 0 22px 0 20px; }
.toolbar .download { width: 23px; height: 23px; stroke-width: 2.4; }
.toolbar .avatar { width: 25px; height: 25px; margin-left: 20px; stroke: none; }
.toolbar .dots { width: 6px; height: 18px; margin-left: 29px; }

.viewport { flex: none; display: flex; height: 968px; }
.page { width: 1901px; height: 968px; overflow: hidden; padding: 0 198px 0 199px; background: linear-gradient(to right, #dbeafe, #bfdbfe); display: flex; flex-direction: column; }
.search-card { flex: none; height: 60px; margin-top: -54px; background: #fff; border-radius: 0 0 8px 8px; box-shadow: 0 10px 15px -3px rgba(0,0,0,.13), 0 4px 6px -4px rgba(0,0,0,.12); }
.bookmark { flex: none; align-self: flex-start; display: flex; align-items: center; gap: 8px; width: 220px; height: 40px; margin: 16px 0 0; padding: 0 0 0 15px; border: 0; border-radius: 4px; background: #f59e0b; color: #fff; font: 15.5px "Open Sans", sans-serif; letter-spacing: -.2px; white-space: nowrap; }
.bookmark svg { width: 13px; height: 17px; fill: none; stroke: #fff; stroke-width: 1.7; }
.heading { flex: none; height: 36px; line-height: 36px; margin: 41px 0 11px; text-align: center; font-size: 29px; letter-spacing: -.45px; color: #2563eb; }

.map { flex: none; position: relative; height: 384px; border: 1px solid #dfe3ea; border-radius: 8px; overflow: hidden; box-shadow: 0 10px 15px -3px rgba(0,0,0,.14), 0 4px 6px -4px rgba(0,0,0,.12); }
.tiles { display: block; width: 100%; height: 100%; font-family: "Noto Sans", "Noto Sans CJK SC", "DejaVu Sans", sans-serif; text-anchor: middle; }
.tiles text { paint-order: stroke; stroke: rgba(255,255,255,.75); stroke-width: 5px; stroke-linejoin: round; }
.city { font-size: 32px; fill: #262626; letter-spacing: .3px; }
.state { font-size: 29px; fill: #8a5f8c; }
.state .latin { font-style: italic; }
.country { font-size: 37px; fill: #6d4a73; }
.country .small { font-size: 33px; }
.tiles .burmese { font-size: 33px; letter-spacing: 0; }
.tiles .burmese.large { font-size: 42px; }
.tiles .bengali { font-size: 35px; letter-spacing: 0; }
.tiles .lao { font-size: 28px; letter-spacing: 0; }
.dots-layer { fill: #fff; stroke: #555; stroke-width: 2; }
.capital-core { fill: #333; stroke: none; }
.zoom-control { position: absolute; left: 10px; top: 10px; width: 34px; border: 2px solid rgba(0,0,0,.22); border-radius: 4px; background: #fff; background-clip: padding-box; }
.zoom-control span { display: block; height: 30px; text-align: center; font: bold 24px/32px "Liberation Mono", monospace; color: #000; }
.zoom-control span + span { border-top: 1px solid #ccc; }
.attribution { position: absolute; right: 0; bottom: 0; height: 17px; width: 62px; display: flex; align-items: center; gap: 4px; padding: 0 0 2px 5px; background: rgba(255,255,255,.8); color: #0078a8; font: 12px "Liberation Sans", sans-serif; }
.flag { width: 12px; height: 8px; background: linear-gradient(#4c7be1 50%, #ffd500 50%); }

.details { flex: none; height: 450px; margin-top: 24px; padding: 24px 24px 0; background: #fff; border-radius: 8px; box-shadow: 0 10px 15px -3px rgba(0,0,0,.14), 0 4px 6px -4px rgba(0,0,0,.12); text-align: center; color: #374151; font-size: 17.5px; line-height: 28px; letter-spacing: -.34px; }
.details b { letter-spacing: -.12px; }
.details h3 { height: 36px; line-height: 34px; margin-bottom: 8px; font-size: 23.5px; letter-spacing: -.5px; color: #000; }
.details .label { margin-top: 8px; }
.details sup { font-size: 12.5px; line-height: 0; vertical-align: 6.5px; }
.good { color: #059669; }
.fair { color: #d97706; }
.grid { display: grid; grid-template-columns: repeat(3, 1fr); gap: 8px; margin-top: 4px; }
.grid div { height: 44px; padding: 8px; border-radius: 4px; background: #f3f4f6; }
.precautions { margin-top: 8px; }

.scrollbar { width: 19px; background: #fcfcfc; display: flex; flex-direction: column; align-items: center; }
.scrollbar i { flex: none; }
.up, .down { width: 0; height: 0; border: 7px solid transparent; }
.up { border-top: 0; border-bottom-color: #8b8b8b; margin-top: 8px; }
.down { border-bottom: 0; border-top-color: #8b8b8b; margin-top: 366px; }
.thumb { width: 11px; height: 285px; margin-top: 289px; border-radius: 6px; background: #8b8b8b; }

.taskbar { flex: none; height: 2px; background: #e2e2e2; display: flex; padding-left: 60px; }
.taskbar span { width: 360px; border: 1px solid #c9c9c9; border-bottom: 0; background: #fff; }
```
